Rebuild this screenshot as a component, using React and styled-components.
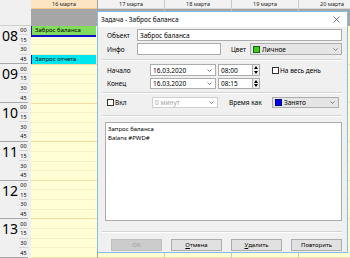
import React from 'react';
import styled, { createGlobalStyle } from 'styled-components';

const Global = createGlobalStyle`
  html, body { margin: 0; padding: 0; }
  body {
    width: 350px; height: 258px; overflow: hidden; background: #fff;
    font-family: "Noto Sans", "Open Sans", sans-serif; color: #000;
  }
`;

const Screen = styled.div`
  position: relative;
  width: 350px;
  height: 258px;
  overflow: hidden;
  display: flex;
`;

/* ---------- calendar ---------- */
const Gutter = styled.div`
  flex: 0 0 31px;
  background: #f0f0f0;
  display: flex;
  flex-direction: column;
`;
const GutterTop = styled.div`
  height: 26px;
  border-bottom: 1px solid #cfcfcf;
`;
const HourBlock = styled.div`
  height: 41px;
  box-sizing: border-box;
  display: flex;
  margin-right: 3px;
  border-bottom: 1px solid #a8a8a8;
`;
const HourNum = styled.div`
  width: 18px;
  font-size: 14px;
  line-height: 14px;
  text-align: right;
  padding-top: 3px;
`;
const Minutes = styled.div`
  flex: 1;
  display: flex;
  flex-direction: column;
  margin-left: 1px;
`;
const Minute = styled.div`
  flex: 1;
  font-size: 5.5px;
  display: flex;
  align-items: center;
  justify-content: center;
  border-bottom: 1px solid #d6d6d6;
  &:last-child { border-bottom: none; }
`;

const DayCol = styled.div`
  flex: 0 0 67px;
  display: flex;
  flex-direction: column;
  box-sizing: border-box;
  border-right: 1px solid ${p => (p.$today ? '#a0a0a0' : '#c9c9c9')};
`;
const DayHeader = styled.div`
  height: 9px;
  box-sizing: border-box;
  background: ${p => (p.$today ? '#fde4c3' : '#f2f2f2')};
  border-bottom: 1px solid ${p => (p.$today ? '#f3c98e' : '#d8d8d8')};
  font-size: 5.5px;
  line-height: 8px;
  text-align: center;
  color: #222;
`;
const AllDay = styled.div`
  height: 18px;
  background: #a6a6a6;
`;
const Slot = styled.div`
  height: 10.25px;
  box-sizing: border-box;
  background: #fffed4;
  border-bottom: 1px solid ${p => (p.$hourEnd ? '#f2dda6' : '#f7f0c6')};
  display: flex;
  position: relative;
  z-index: ${p => (p.$raised ? 1 : 0)};
`;
const Event = styled.div`
  flex: 1;
  margin-right: 1px;
  margin-bottom: ${p => (p.$selected ? '-2px' : '0')};
  background: ${p => p.$color};
  border-left: 1px solid #1d1dc0;
  border-bottom: ${p => (p.$selected ? '2px solid #1010d0' : 'none')};
  font-size: 6px;
  line-height: 9px;
  padding-left: 3px;
  white-space: nowrap;
  overflow: hidden;
`;

/* ---------- dialog ---------- */
const Window = styled.div`
  position: absolute;
  left: 97px;
  top: 11px;
  width: 251px;
  height: 242px;
  box-sizing: border-box;
  border: 1px solid #84bde6;
  background: #f0f0f0;
  display: flex;
  flex-direction: column;
  font-size: 6.5px;
`;
const TitleBar = styled.div`
  height: 15px;
  background: #fff;
  display: flex;
  align-items: center;
  justify-content: space-between;
  padding: 0 7px 0 3px;
  font-size: 6.5px;
`;
const Body = styled.div`
  flex: 1;
  display: flex;
  flex-direction: column;
  padding: 1px 5px 0 7px;
`;
const Row = styled.div`
  display: flex;
  align-items: center;
  height: ${p => p.$h || 12}px;
  margin-top: ${p => p.$mt || 0}px;
`;
const Label = styled.span`
  flex: 0 0 ${p => p.$w}px;
  padding-left: ${p => (p.$pl ?? 2)}px;
  box-sizing: border-box;
  white-space: nowrap;
`;
const TextBox = styled.div`
  height: 100%;
  box-sizing: border-box;
  flex: ${p => (p.$w ? `0 0 ${p.$w}px` : '1')};
  margin-left: ${p => p.$ml || 0}px;
  background: #fff;
  border: 1px solid #ababab;
  display: flex;
  align-items: center;
  padding-left: 2px;
  white-space: nowrap;
`;
const Combo = styled.div`
  height: 100%;
  box-sizing: border-box;
  flex: ${p => (p.$w ? `0 0 ${p.$w}px` : '1')};
  background: ${p => (p.$flat ? '#fff' : '#e5e5e5')};
  border: 1px solid ${p => (p.$disabled ? '#cfcfcf' : '#adadad')};
  color: ${p => (p.$disabled ? '#a6a6a6' : '#000')};
  display: flex;
  align-items: center;
  padding: 0 3px 0 2px;
  gap: 2px;
  white-space: nowrap;
`;
const ComboText = styled.span`
  flex: 1;
`;
const Swatch = styled.span`
  width: 5px;
  height: 5px;
  background: ${p => p.$c};
  border: 1px solid ${p => p.$b};
`;
const Spinner = styled.div`
  flex: 0 0 7px;
  height: 100%;
  box-sizing: border-box;
  border: 1px solid #ababab;
  border-left: none;
  background: #f0f0f0;
  display: flex;
  flex-direction: column;
  align-items: center;
  justify-content: space-around;
`;
const Check = styled.span`
  width: 7px;
  height: 7px;
  box-sizing: border-box;
  background: #fff;
  border: 1px solid #333;
  margin-right: 1px;
  flex: 0 0 7px;
`;
const CheckWrap = styled.div`
  display: flex;
  align-items: center;
  margin-left: ${p => p.$ml || 0}px;
  flex: ${p => (p.$w ? `0 0 ${p.$w}px` : 'none')};
  white-space: nowrap;
`;
const Sep = styled.div`
  margin: ${p => p.$mt}px 0 0 -3px;
  height: 0;
  border-top: 1px solid #d4d4d4;
  border-bottom: 1px solid #fff;
`;
const Memo = styled.div`
  margin-top: 5px;
  height: 99px;
  box-sizing: border-box;
  background: #fff;
  border: 1px solid #ababab;
  padding: 2px 2px;
  font-size: 6px;
  line-height: 8.5px;
`;
const Buttons = styled.div`
  margin-top: 6px;
  display: flex;
  justify-content: flex-end;
  gap: 9px;
`;
const Button = styled.div`
  width: 51px;
  height: 12px;
  box-sizing: border-box;
  background: ${p => (p.$disabled ? '#cccccc' : '#e1e1e1')};
  border: 1px solid ${p => (p.$disabled ? '#bfbfbf' : '#adadad')};
  color: ${p => (p.$disabled ? '#a0a0a0' : '#000')};
  display: flex;
  align-items: center;
  justify-content: center;
  font-size: 6px;
`;
const U = styled.span`
  text-decoration: underline;
  text-underline-offset: 1px;
`;

const CloseIcon = () => (
  <svg width="7" height="7" viewBox="0 0 7 7">
    <path d="M0.5 0.5 L6.5 6.5 M6.5 0.5 L0.5 6.5" stroke="#444" strokeWidth="0.7" fill="none" />
  </svg>
);
const Chevron = () => (
  <svg width="5" height="3" viewBox="0 0 5 3">
    <polyline points="0.5,0.5 2.5,2.5 4.5,0.5" fill="none" stroke="#666" strokeWidth="0.8" />
  </svg>
);
const SpinArrows = () => (
  <>
    <svg width="4" height="3" viewBox="0 0 4 3"><polygon points="2,0 4,3 0,3" fill="#000" /></svg>
    <svg width="4" height="3" viewBox="0 0 4 3"><polygon points="0,0 4,0 2,3" fill="#000" /></svg>
  </>
);

const hours = ['08', '09', '10', '11', '12', '13'];
const days = ['16 марта', '17 марта', '18 марта', '19 марта', '20 марта'];

function Day({ label, today }) {
  const slots = [];
  for (let i = 0; i < 24; i++) {
    let ev = null;
    if (today && i === 0) ev = <Event $color="#84dc5c" $selected>Заброс баланса</Event>;
    if (today && i === 3) ev = <Event $color="#00e6ef">Запрос отчета</Event>;
    slots.push(
      <Slot key={i} $hourEnd={i % 4 === 3} $raised={today && i === 0}>
        {ev}
      </Slot>
    );
  }
  return (
    <DayCol $today={today}>
      <DayHeader $today={today}>{label}</DayHeader>
      <AllDay />
      {slots}
    </DayCol>
  );
}

export default function App() {
  return (
    <Screen>
      <Global />
      <Gutter>
        <GutterTop />
        {hours.map(h => (
          <HourBlock key={h}>
            <HourNum>{h}</HourNum>
            <Minutes>
              {['00', '15', '30', '45'].map(m => (
                <Minute key={m}>{m}</Minute>
              ))}
            </Minutes>
          </HourBlock>
        ))}
      </Gutter>
      {days.map((d, i) => (
        <Day key={d} label={d} today={i === 0} />
      ))}

      <Window>
        <TitleBar>
          <span>Задача - Заброс баланса</span>
          <CloseIcon />
        </TitleBar>
        <Body>
          <Row $mt={1}>
            <Label $w={32}>Объект</Label>
            <TextBox>Заброс баланса</TextBox>
          </Row>
          <Row $mt={2}>
            <Label $w={32}>Инфо</Label>
            <TextBox $w={84} />
            <Label $w={29} $pl={10}>Цвет</Label>
            <Combo>
              <Swatch $c="#3fcc1c" $b="#1f5f10" />
              <ComboText>Личное</ComboText>
              <Chevron />
            </Combo>
          </Row>
          <Sep $mt={4} />
          <Row $mt={3}>
            <Label $w={45}>Начало</Label>
            <Combo $w={66} $flat>
              <ComboText>16.03.2020</ComboText>
              <Chevron />
            </Combo>
            <TextBox $w={35} $ml={2}>08:00</TextBox>
            <Spinner><SpinArrows /></Spinner>
            <CheckWrap $ml={12}>
              <Check />
              На весь день
            </CheckWrap>
          </Row>
          <Row $mt={2} $h={11}>
            <Label $w={45}>Конец</Label>
            <Combo $w={66} $flat>
              <ComboText>16.03.2020</ComboText>
              <Chevron />
            </Combo>
            <TextBox $w={35} $ml={2}>08:15</TextBox>
            <Spinner><SpinArrows /></Spinner>
          </Row>
          <Sep $mt={3} />
          <Row $mt={3} $h={11}>
            <CheckWrap $w={45} $ml={2}>
              <Check />
              Вкл
            </CheckWrap>
            <Combo $w={66} $flat $disabled>
              <ComboText>0 минут</ComboText>
              <Chevron />
            </Combo>
            <Label $w={54} $pl={11}>Время как</Label>
            <Combo $w={67}>
              <Swatch $c="#0000e6" $b="#000080" />
              <ComboText>Занято</ComboText>
              <Chevron />
            </Combo>
          </Row>
          <Sep $mt={7} />
          <Memo>
            Запрос баланса
            <br />
            Balans #PWD#
          </Memo>
          <Sep $mt={10} />
          <Buttons>
            <Button $disabled>OK</Button>
            <Button><U>О</U>тмена</Button>
            <Button><U>У</U>далить</Button>
            <Button>Повторить</Button>
          </Buttons>
        </Body>
      </Window>
    </Screen>
  );
}
